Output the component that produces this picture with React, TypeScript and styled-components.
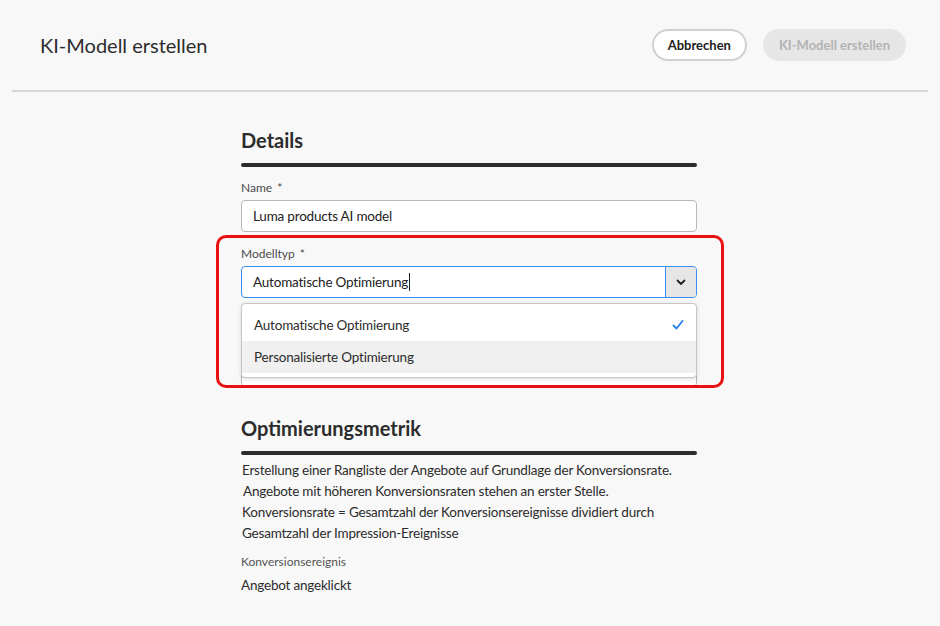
import { createGlobalStyle } from "styled-components";
import styled from "styled-components";

const GlobalStyle = createGlobalStyle`
  html, body {
    margin: 0;
    padding: 0;
    background: #f8f8f8;
  }
  body {
    font-family: "Lato", "Open Sans", sans-serif;
    color: #2c2c2c;
  }
`;

const Page = styled.div`
  width: 940px;
  height: 626px;
  background: #f8f8f8;
  overflow: hidden;
`;

const Header = styled.header`
  height: 90px;
  display: flex;
  align-items: center;
  justify-content: space-between;
  padding: 0 34px 0 40px;
`;

const Title = styled.h1`
  margin: 0;
  font-size: 20px;
  font-weight: 400;
  color: #2c2c2c;
`;

const Actions = styled.div`
  display: flex;
  gap: 16px;
`;

const Button = styled.button<{ $variant: "secondary" | "disabled" }>`
  height: 32px;
  padding: 0 14px;
  border-radius: 16px;
  font-family: inherit;
  font-size: 13px;
  font-weight: 700;
  cursor: pointer;
  border: 2px solid
    ${p => (p.$variant === "secondary" ? "#d0d0d0" : "#e6e6e6")};
  background: ${p => (p.$variant === "secondary" ? "#ffffff" : "#e6e6e6")};
  color: ${p => (p.$variant === "secondary" ? "#222" : "#b3b3b3")};
`;

const Divider = styled.div`
  height: 2px;
  margin: 0 12px;
  background: #d5d5d5;
`;

const Content = styled.main`
  width: 456px;
  margin: 0 auto;
  padding-top: 36px;
  transform: translateX(-1px);
`;

const SectionTitle = styled.h2<{ $top?: number }>`
  margin: ${p => p.$top ?? 0}px 0 0;
  font-size: 20px;
  line-height: 24px;
  font-weight: 700;
  color: #2c2c2c;
`;

const SectionRule = styled.div`
  height: 4px;
  border-radius: 2px;
  background: #2c2c2c;
  margin-top: 11px;
`;

const Field = styled.div<{ $top: number }>`
  margin-top: ${p => p.$top}px;
  display: flex;
  flex-direction: column;
  gap: 4px;
`;

const Label = styled.label`
  font-size: 12px;
  line-height: 16px;
  height: 16px;
  color: #4b4b4b;
`;

const Star = styled.span`
  margin-left: 5px;
  font-size: 12px;
  line-height: 16px;
`;

const TextInput = styled.div<{ $height?: number }>`
  box-sizing: border-box;
  height: ${p => p.$height ?? 32}px;
  border: 1px solid #b8b8b8;
  border-radius: 4px;
  background: #ffffff;
  padding: 0 11px;
  font-size: 13.5px;
  letter-spacing: -0.2px;
  display: flex;
  align-items: center;
  color: #222;
`;

const Highlight = styled.div`
  position: relative;
`;

const RedFrame = styled.div`
  position: absolute;
  top: -11px;
  left: -25px;
  right: -27px;
  bottom: -1px;
  border: 3px solid #e8110f;
  border-radius: 10px;
  pointer-events: none;
  z-index: 3;
`;

const Combo = styled.div`
  box-sizing: border-box;
  height: 32px;
  border: 1px solid #378ef0;
  border-radius: 4px;
  background: #ffffff;
  display: flex;
  overflow: hidden;
`;

const ComboText = styled.div`
  flex: 1;
  display: flex;
  align-items: center;
  padding: 0 11px;
  font-size: 13.5px;
  letter-spacing: -0.2px;
  color: #222;
`;

const Caret = styled.span`
  display: inline-block;
  width: 1px;
  height: 18px;
  background: #222;
  margin-left: 1px;
`;

const ComboButton = styled.div`
  width: 30px;
  background: #e6e6e6;
  border-left: 1px solid #378ef0;
  display: flex;
  align-items: center;
  justify-content: center;
`;

const Popover = styled.ul`
  position: absolute;
  top: 57px;
  left: 0;
  right: 0;
  margin: 0;
  padding: 5px 0 4px;
  list-style: none;
  background: #ffffff;
  border: 1px solid #c6c6c6;
  border-radius: 4px;
  box-shadow: 0 1px 4px rgba(0, 0, 0, 0.15);
  z-index: 2;
`;

const Option = styled.li<{ $hover?: boolean }>`
  height: 32px;
  display: flex;
  align-items: center;
  justify-content: space-between;
  padding: 0 12px 0 12px;
  font-size: 13.5px;
  letter-spacing: -0.2px;
  color: #2c2c2c;
  background: ${p => (p.$hover ? "#f0f0f0" : "transparent")};
`;

const Paragraph = styled.p`
  margin: 5px 0 0;
  font-size: 13.5px;
  letter-spacing: -0.2px;
  line-height: 21px;
  color: #2c2c2c;
`;

const Line = styled.span<{ $indent?: boolean }>`
  display: block;
  white-space: nowrap;
  padding-left: ${p => (p.$indent ? 2 : 1)}px;
`;

const SmallLabel = styled.div`
  margin-top: 10px;
  font-size: 12px;
  line-height: 16px;
  color: #555;
`;

const Value = styled.div`
  margin-top: 6px;
  font-size: 13.5px;
  letter-spacing: -0.2px;
  line-height: 18px;
  color: #2c2c2c;
`;

const Chevron = () => (
  <svg width="12" height="12" viewBox="0 0 12 12" fill="none">
    <path
      d="M2.5 4.5 6 8l3.5-3.5"
      stroke="#222"
      strokeWidth="1.8"
      strokeLinecap="round"
      strokeLinejoin="round"
    />
  </svg>
);

const Check = () => (
  <svg width="12" height="12" viewBox="0 0 12 12" fill="none">
    <path
      d="M1.5 6.5 4.5 9.5 10.5 2"
      stroke="#2680eb"
      strokeWidth="1.8"
      strokeLinecap="round"
      strokeLinejoin="round"
    />
  </svg>
);

export default function App() {
  return (
    <Page>
      <GlobalStyle />
      <Header>
        <Title>KI-Modell erstellen</Title>
        <Actions>
          <Button $variant="secondary">Abbrechen</Button>
          <Button $variant="disabled">KI-Modell erstellen</Button>
        </Actions>
      </Header>
      <Divider />

      <Content>
        <SectionTitle>Details</SectionTitle>
        <SectionRule />

        <Field $top={13}>
          <Label>
            Name<Star>*</Star>
          </Label>
          <TextInput>Luma products AI model</TextInput>
        </Field>

        <Highlight>
          <RedFrame />
          <Field $top={14}>
            <Label>
              Modelltyp<Star>*</Star>
            </Label>
            <Combo>
              <ComboText>
                Automatische Optimierung
                <Caret />
              </ComboText>
              <ComboButton>
                <Chevron />
              </ComboButton>
            </Combo>
          </Field>
          <Popover>
            <Option>
              Automatische Optimierung
              <Check />
            </Option>
            <Option $hover>Personalisierte Optimierung</Option>
          </Popover>
          {/* field hidden behind the open popover */}
          <Field $top={34}>
            <TextInput $height={55} />
          </Field>
        </Highlight>

        <SectionTitle $top={29}>Optimierungsmetrik</SectionTitle>
        <SectionRule />
        <Paragraph>
          <Line>
            Erstellung einer Rangliste der Angebote auf Grundlage der
            Konversionsrate.
          </Line>
          <Line $indent>
            Angebote mit höheren Konversionsraten stehen an erster Stelle.
          </Line>
          <Line>
            Konversionsrate = Gesamtzahl der Konversionsereignisse dividiert
            durch
          </Line>
          <Line>Gesamtzahl der Impression-Ereignisse</Line>
        </Paragraph>
        <SmallLabel>Konversionsereignis</SmallLabel>
        <Value>Angebot angeklickt</Value>
      </Content>
    </Page>
  );
}
